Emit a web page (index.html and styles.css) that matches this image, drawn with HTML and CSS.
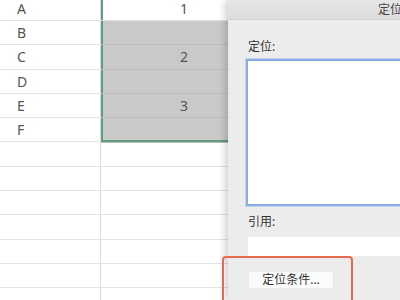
FILE: index.html
```html
<!DOCTYPE html>
<html>
<head>
  <title>定位</title>
  <link rel="stylesheet" href="styles.css">
</head>
<body>
  <div class="screen">
    <div class="sheet">
      <div class="row"><div class="cell key">A</div><div class="cell val sel-edge active">1</div></div>
      <div class="row"><div class="cell key">B</div><div class="cell val sel-edge sel"></div></div>
      <div class="row"><div class="cell key">C</div><div class="cell val sel-edge sel">2</div></div>
      <div class="row"><div class="cell key">D</div><div class="cell val sel-edge sel"></div></div>
      <div class="row"><div class="cell key">E</div><div class="cell val sel-edge sel">3</div></div>
      <div class="row"><div class="cell key">F</div><div class="cell val sel-edge sel sel-bottom"></div></div>
      <div class="row"><div class="cell key"></div><div class="cell val"></div></div>
      <div class="row"><div class="cell key"></div><div class="cell val"></div></div>
      <div class="row"><div class="cell key"></div><div class="cell val"></div></div>
      <div class="row"><div class="cell key"></div><div class="cell val"></div></div>
      <div class="row"><div class="cell key"></div><div class="cell val"></div></div>
      <div class="row"><div class="cell key"></div><div class="cell val"></div></div>
      <div class="row"><div class="cell key"></div><div class="cell val"></div></div>
    </div>

    <div class="dialog">
      <div class="titlebar">定位</div>
      <div class="dialog-body">
        <div class="label">定位:</div>
        <div class="listbox"></div>
        <div class="label ref-label">引用:</div>
        <div class="ref-input"></div>
        <div class="actions">
          <button class="btn">定位条件...</button>
        </div>
      </div>
    </div>

    <div class="highlight"></div>
  </div>
</body>
</html>
```

FILE: styles.css
```css
body {
  margin: 0;
  font-family: "Noto Sans", "Noto Sans CJK SC", sans-serif;
  background: #fff;
  overflow: hidden;
}
.screen {
  position: relative;
  display: flex;
  width: 400px;
  height: 300px;
  overflow: hidden;
}

/* spreadsheet */
.sheet {
  width: 228px;
  flex-shrink: 0;
  margin-top: -3.3px;
}
.row {
  display: flex;
  height: 24.3px;
  box-sizing: border-box;
  border-bottom: 1px solid #e3e3e3;
}
.cell {
  display: flex;
  align-items: center;
  box-sizing: border-box;
  font-size: 14px;
  color: #555;
}
.key {
  width: 101px;
  padding-left: 17px;
  border-right: 1px solid #dcdcdc;
}
.val {
  flex: 1;
  justify-content: flex-end;
  padding-right: 40px;
}
.sel-edge {
  border-left: 2px solid #5f9c7c;
}
.active {
  background: #fff;
}
.sel {
  background: #c9c9c9;
  box-shadow: 0 1px 0 #bcbcbc;
}
.sel-bottom {
  border-bottom: 2px solid #5f9c7c;
  margin-bottom: -1px;
}

/* dialog */
.dialog {
  width: 324px;
  flex-shrink: 0;
  background: #ececec;
  box-shadow: -3px 0 7px rgba(0, 0, 0, 0.18);
  z-index: 1;
}
.titlebar {
  height: 20px;
  box-sizing: border-box;
  background: linear-gradient(#e6e6e6, #dcdcdc);
  border-bottom: 1px solid #d2d2d2;
  text-align: center;
  font-size: 12px;
  line-height: 20px;
  color: #444;
}
.dialog-body {
  padding: 19px 0 0 18px;
}
.label {
  font-size: 12px;
  line-height: 16px;
  color: #333;
  padding-left: 2px;
}
.listbox {
  margin-top: 4px;
  height: 147px;
  background: #fff;
  border: 2px solid #8aaae4;
  box-shadow: 0 0 0 1px #c4d4f1;
  box-sizing: border-box;
}
.ref-label {
  margin-top: 8px;
}
.ref-input {
  margin: 7px 0 0 2px;
  height: 19px;
  background: #fff;
}
.actions {
  padding: 16px 0 0 3px;
}
.btn {
  display: block;
  width: 84px;
  height: 16px;
  padding: 0;
  border: 0;
  border-radius: 3px;
  background: #fbfbfb;
  font-family: inherit;
  font-size: 12px;
  line-height: 16px;
  color: #333;
  text-align: center;
}

/* annotation */
.highlight {
  position: absolute;
  left: 222px;
  top: 256px;
  width: 131px;
  height: 60px;
  border: 2px solid #e7694f;
  border-radius: 4px;
  box-sizing: border-box;
  z-index: 2;
}
```
